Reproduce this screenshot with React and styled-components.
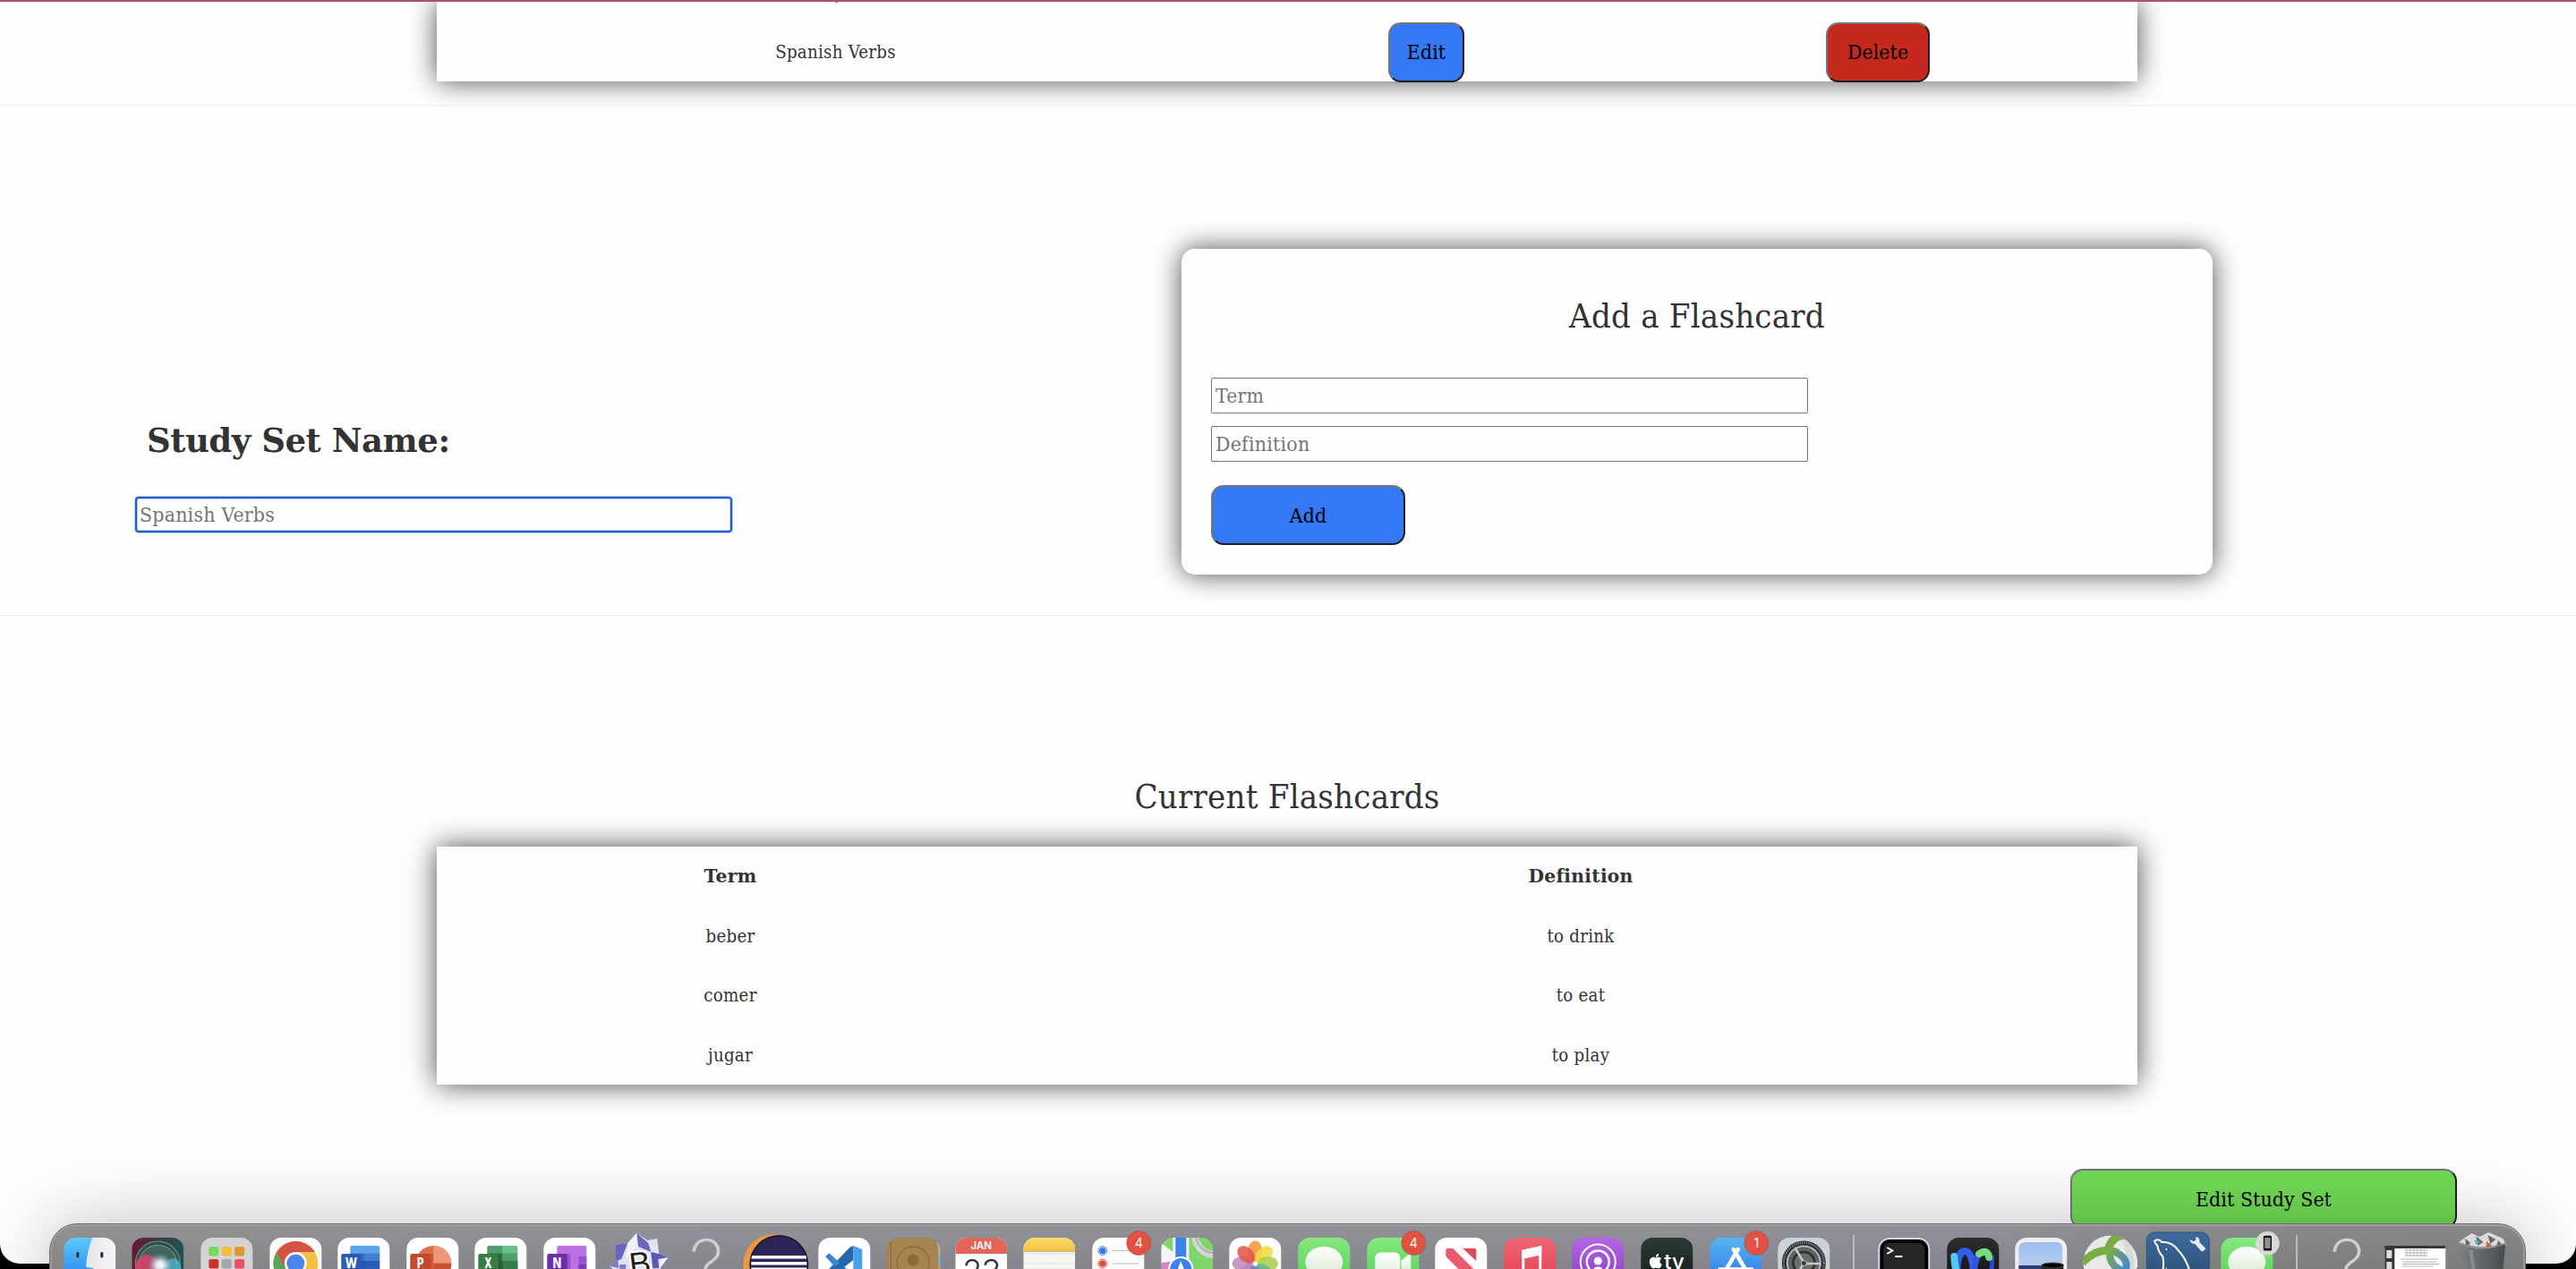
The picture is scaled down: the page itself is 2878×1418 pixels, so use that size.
import React from "react";
import styled, { createGlobalStyle, css } from "styled-components";
import { FaApple } from "react-icons/fa";

const GlobalStyle = createGlobalStyle`
  *, *::before, *::after { box-sizing: border-box; }
  body { margin: 0; background: #000; }
`;

const serif = css`
  font-family: "DejaVu Serif Condensed", "DejaVu Serif", Georgia, serif;
  font-stretch: condensed;
`;

const wideSerif = css`
  font-family: "DejaVu Serif", Georgia, serif;
  font-stretch: normal;
  font-weight: 700;
`;

const Screen = styled.div`
  position: relative;
  width: 2878px;
  height: 1418px;
  overflow: hidden;
  background: #000;
  ${serif}
  color: #333;
`;

const BrowserPage = styled.main`
  display: flex;
  flex-direction: column;
  height: 1412px;
  background: #fefefe;
  border-top: 2px solid #a9536f;
  border-radius: 0 0 22px 22px;
  overflow: hidden;
`;

const Divider = styled.hr`
  width: 100%;
  height: 1px;
  margin: 0;
  border: 0;
  flex: none;
  background: #ececec;
`;

const Section = styled.section`
  display: flex;
  flex-direction: ${(p) => (p.$row ? "row" : "column")};
  align-items: ${(p) => (p.$row ? "flex-start" : "center")};
  height: ${(p) => p.$height}px;
  padding-top: ${(p) => p.$top || 0}px;
  padding-right: 2px;
  flex: none;
`;

const Table = styled.div`
  width: 1900px;
  margin-top: ${(p) => p.$gap || 0}px;
  background: #fefefe;
  box-shadow: 0 0 30px rgba(0, 0, 0, 0.7);
`;

const Row = styled.div`
  display: grid;
  grid-template-columns: ${(p) => p.$columns};
  align-items: center;
  justify-items: center;
  height: 66.5px;
  font-size: 20.3px;
  letter-spacing: 0.25px;
  ${(p) => p.$head && wideSerif}
`;

const RowRemainder = styled.div`
  height: 22.5px;
  padding-left: 445px;
`;

const Descender = styled.div`
  width: 3px;
  height: 1px;
  background: #8a8a8a;
`;

const Button = styled.button`
  ${serif}
  width: ${(p) => p.$width}px;
  height: 67px;
  padding: 0;
  font-size: 22.8px;
  letter-spacing: 0.1px;
  color: #000;
  background: ${(p) => p.$color};
  border: 2px solid;
  border-color: #767676 #1f1f1f #1f1f1f #767676;
  border-radius: 14px;
`;

const NameColumn = styled.div`
  display: flex;
  flex-direction: column;
  width: 1320px;
  flex: none;
  padding: 350px 0 0 151px;
`;

const Title = styled.h2`
  margin: 0;
  font-size: 38px;
  line-height: 48px;
  font-weight: 400;
  letter-spacing: 0.2px;
  text-align: center;
`;

const NameTitle = styled(Title)`
  ${wideSerif}
  font-size: 37px;
  letter-spacing: -0.45px;
  text-align: left;
  padding-left: 13px;
  margin-bottom: 39px;
`;

const Input = styled.input`
  ${serif}
  width: 667px;
  height: 40px;
  padding: 0 0 0 4px;
  font-size: 22.8px;
  letter-spacing: 0.25px;
  color: #333;
  background: #fefefe;
  border: 1px solid #767676;
  border-radius: 2px;
  outline: none;
  &::placeholder { color: #757575; opacity: 1; }
`;

const ActiveInput = styled(Input)`
  padding-left: 3px;
  border: 2px solid #2160c8;
  border-radius: 4px;
  box-shadow: 0 0 0 1px #b9cbec, inset 0 0 0 1px #b9cbec;
`;

const Card = styled.div`
  display: flex;
  flex-direction: column;
  width: 1152px;
  height: 364px;
  margin-top: 160px;
  padding: 51px 33px 33px;
  border-radius: 15px;
  background: #fefefe;
  box-shadow: 0 0 30px rgba(0, 0, 0, 0.7);
`;

const Fields = styled.div`
  display: flex;
  flex-direction: column;
  gap: 14px;
  margin: 45px 0 26px;
`;

const Actions = styled.div`
  display: flex;
  justify-content: flex-end;
  width: 100%;
  margin-top: 94px;
  padding-right: 131px;
`;

const Dock = styled.div`
  position: absolute;
  left: 55px;
  top: 1367px;
  display: flex;
  width: 2767px;
  height: 104px;
  padding-left: 5.7px;
  border: 1px solid #6c6c6e;
  border-radius: 31px;
  background:
    linear-gradient(rgba(0, 0, 0, 0) 0, rgba(0, 0, 0, 0.09) 51px),
    linear-gradient(90deg, #929293, #92929a 25%, #929197 60%, #93909b 78%, #8a8c8a 87%, #868885);
  box-shadow: 0 4px 84px rgba(0, 0, 0, 0.27), inset 0 2px 0 #a09fa2, inset 2px 0 0 #9b9b9c, inset -2px 0 0 #989a98;
`;

const Slot = styled.div`
  width: 76.64px;
  flex: none;
`;

const Glyph = styled.svg`
  display: block;
  width: 76.64px;
  height: 50px;
`;

const DockSeparator = styled.div`
  width: 35.1px;
  height: 80px;
  padding: 12px 16.5px 0;
  flex: none;
  &::before {
    content: "";
    display: block;
    width: 2px;
    height: 68px;
    background: #bcbcbf;
  }
`;

const Tile = ({ fill = "#fff", children }) => (
  <>
    <rect width="58" height="58" rx="13" fill={fill} />
    {children}
  </>
);

const Grad = ({ id, from, to, x2 = 0, y2 = 1 }) => (
  <linearGradient id={id} x1="0" y1="0" x2={x2} y2={y2}>
    <stop offset="0" stopColor={from} />
    <stop offset="1" stopColor={to} />
  </linearGradient>
);

const TileClip = ({ id }) => (
  <clipPath id={id}>
    <rect width="58" height="58" rx="13" />
  </clipPath>
);

const Finder = () => (
  <g clipPath="url(#finderClip)">
    <TileClip id="finderClip" />
    <Grad id="finderBlue" from="#5ecbfa" to="#1f6ff0" />
    <Grad id="finderFace" from="#e6e7ea" to="#f6f6f8" x2={1} y2={0} />
    <rect width="58" height="58" fill="url(#finderBlue)" />
    <path d="M32 0C28 10 25 23 25 33L33 34V58H58V0Z" fill="url(#finderFace)" />
    <rect x="14" y="16" width="3" height="6.5" rx="1.4" fill="#28313d" />
    <rect x="41" y="16" width="3" height="6.5" rx="1.4" fill="#28313d" />
  </g>
);

const Siri = () => (
  <g clipPath="url(#siriClip)">
    <TileClip id="siriClip" />
    <Grad id="siriBg" from="#6a1634" to="#1c5450" x2={1} y2={0} />
    <radialGradient id="siriGlow" cx=".52" cy=".52" r=".5">
      <stop offset="0" stopColor="#fff" />
      <stop offset=".3" stopColor="#e5f2f8" stopOpacity=".9" />
      <stop offset=".65" stopColor="#9bbfd0" stopOpacity=".4" />
      <stop offset="1" stopColor="#2b5a52" stopOpacity="0" />
    </radialGradient>
    <rect width="58" height="58" fill="url(#siriBg)" />
    <circle cx="29" cy="29" r="25" fill="#3f4a4a" stroke="#4da38a" strokeWidth="1.2" />
    <circle cx="29" cy="30" r="21.5" fill="#41635c" stroke="#56b392" />
    <ellipse cx="17" cy="32" rx="13" ry="13" fill="#e0406c" opacity=".85" />
    <ellipse cx="46" cy="34" rx="9" ry="11" fill="#4db7d6" opacity=".75" />
    <ellipse cx="31" cy="30" rx="16" ry="15" fill="url(#siriGlow)" />
  </g>
);

const Launchpad = () => (
  <Tile fill="#d3d3d5">
    {["#72dc5a", "#f3bd3e", "#e69334", "#cc3427", "#9fa8ad", "#e8505f"].map((c, i) => (
      <rect key={i} x={9 + (i % 3) * 14.4} y={10 + Math.floor(i / 3) * 14} width="11" height="10.5" rx="2.5" fill={c} />
    ))}
  </Tile>
);

const Chrome = () => (
  <Tile fill="#fafafa">
    <circle cx="29" cy="29" r="25" fill="#f3c244" />
    <path d="M29 29L7.5 16.5A25 25 0 0 1 50.5 16H29Z" fill="#d65244" />
    <path d="M7.5 16.5A25 25 0 0 0 29 54L34 36L18 34Z" fill="#59a55c" />
    <path d="M7.5 16.5L18 35L29 22Z" fill="#d65244" />
    <circle cx="29" cy="28.5" r="12.5" fill="#fff" />
    <circle cx="29" cy="28.5" r="10" fill="#4a86ea" />
  </Tile>
);

const OfficeTile = ({ letter, dark, children }) => (
  <Tile>
    {children}
    <rect x="4" y="18" width="22.5" height="24" rx="2" fill={dark} />
    <text x="15.2" y="34" textAnchor="middle" fontFamily="'Open Sans', sans-serif" fontWeight="700" fontSize="16.5" fill="#fff">
      {letter}
    </text>
  </Tile>
);

const Word = () => (
  <OfficeTile letter="W" dark="#2a5bb8">
    <path d="M16 9H45Q47 9 47 11V18H14V11Q14 9 16 9Z" fill="#5ba6ea" />
    <rect x="14" y="17.5" width="33" height="8.5" fill="#4380d2" />
    <rect x="14" y="26" width="33" height="18" fill="#2a5bb8" />
    <rect x="14" y="18" width="16" height="26" fill="#234f9f" opacity=".45" />
  </OfficeTile>
);

const PowerPoint = () => (
  <OfficeTile letter="P" dark="#c34a2b">
    <circle cx="30" cy="29" r="20" fill="#de6d4e" />
    <path d="M30 9A20 20 0 0 1 50 29H30Z" fill="#f09576" />
    <path d="M30 28.5H50A20 20 0 0 1 30 49Z" fill="#ca5234" />
    <rect x="14" y="18" width="15.500" height="26" fill="#a83c22" opacity=".45" />
  </OfficeTile>
);

const Excel = () => (
  <OfficeTile letter="X" dark="#357c45">
    <path d="M16 9H31.500V18H14V11Q14 9 16 9Z" fill="#519d6a" />
    <path d="M31.500 9H46Q48 9 48 11V18H31.500Z" fill="#66c288" />
    <rect x="31.5" y="17.5" width="16.5" height="8.5" fill="#519d6a" />
    <rect x="14" y="17.5" width="17.5" height="8.5" fill="#357c45" />
    <rect x="14" y="26" width="34" height="18" fill="#2c5f3c" />
    <rect x="31.5" y="26" width="16.5" height="18" fill="#347d48" />
    <rect x="24" y="18" width="6" height="26" fill="#22532f" opacity=".5" />
  </OfficeTile>
);

const OneNote = () => (
  <OfficeTile letter="N" dark="#6c2fac">
    <path d="M17 9H46Q48 9 48 11V53H15V11Q15 9 17 9Z" fill="#bb70e3" />
    <rect x="39" y="21" width="9" height="9" fill="#9c50cf" />
    <rect x="39" y="30" width="9" height="14" fill="#8338ba" />
    <rect x="24" y="18" width="6" height="26" fill="#7b35ad" opacity=".5" />
  </OfficeTile>
);

const BBEdit = () => (
  <g>
    <path d="M3 8L17 6L27 -5L39 3L50 1L52 18L62 22L54 33V58H4V38L-3 32L6 24Z" fill="#e1e2f2" />
    <path d="M3 8L17 6L10 24L4 26Z" fill="#6966bf" />
    <path d="M27 -5L40 6L43 16L29 10Z" fill="#6966bf" />
    <path d="M43 16L52 18L62 22L51 24L52 34H45Z" fill="#5b59b5" />
    <path d="M27 -5L17 6L15 24L27 10Z" fill="#f1f1fa" />
    <path d="M-3 32L6 24L7 34ZM8 30h7v6H8z" fill="#7d7bc8" />
    <path d="M54 25L62 22L54 33Z" fill="#f5f5fb" />
    <text x="31" y="41" textAnchor="middle" transform="rotate(-7 32 32)" fontFamily="'Liberation Sans', sans-serif" fontSize="36" fontWeight="400" fill="#1f1f22" stroke="#fff" strokeWidth="4" paintOrder="stroke">
      B
    </text>
  </g>
);

const Missing = () => (
  <text x="29" y="59" textAnchor="middle" fontFamily="Inter, Roboto, sans-serif" fontWeight="250" fontSize="79" fill="#cfcfd1">
    ?
  </text>
);

const Eclipse = () => (
  <g>
    <circle cx="27" cy="30" r="34" fill="#e9993f" />
    <circle cx="33" cy="30" r="33" fill="#17162a" />
    <circle cx="33" cy="30" r="31.5" fill="#2c2456" />
    <path d="M3 20H63L64 23.500H2ZM2 27H64V30.500H2ZM2 33.500H64V37H2Z" fill="#fff" />
  </g>
);

const VSCode = () => (
  <Tile>
    <path d="M8 21L12 17.500L43 45L40 52Z" fill="#2f79c6" />
    <path d="M8 39L35 11L39 9V25L12 46Z" fill="#2766a9" />
    <path d="M8 21L12 17.500L24 28L18 32Z" fill="#3b86d2" />
    <path d="M39 9L49 13V50L39 54Z" fill="#4ba0ee" />
  </Tile>
);

const Contacts = () => (
  <g>
    <path d="M52 6H57Q60 8 60 12V58H52Z" fill="#b9b4a6" />
    <rect x="54" y="20" width="6" height="12" fill="#6cb9e2" />
    <rect x="54" y="32" width="6" height="12" fill="#e8953c" />
    <rect width="58" height="58" rx="13" fill="#a78350" />
    <path d="M5 4V58" stroke="#8b6a3b" />
    <circle cx="30" cy="28" r="18" fill="none" stroke="#8b6a3b" strokeWidth="1.300" />
    <circle cx="30" cy="25" r="6.500" fill="#8b6a3b" />
    <path d="M17 42Q20 35 30 35T43 42Z" fill="#8b6a3b" />
  </g>
);

const Calendar = () => (
  <g clipPath="url(#calendarClip)">
    <TileClip id="calendarClip" />
    <rect width="58" height="58" fill="#fff" />
    <rect width="58" height="18" fill="#e3655a" />
    <text x="29" y="13.500" textAnchor="middle" fontFamily="Inter, sans-serif" fontWeight="600" fontSize="11.500" fill="#fff">JAN</text>
    <text x="29" y="50" textAnchor="middle" fontFamily="Inter, sans-serif" fontWeight="300" fontSize="36" letterSpacing="-1" fill="#2e2e2e">23</text>
  </g>
);

const Notes = () => (
  <g clipPath="url(#notesClip)">
    <TileClip id="notesClip" />
    <Grad id="notesTop" from="#fbdb6b" to="#f5c33c" />
    <rect width="58" height="58" fill="#f6f5f2" />
    <rect width="58" height="15" fill="url(#notesTop)" />
    <path d="M0 15.500H58" stroke="#b5b4ac" />
    <path d="M2 18H58" stroke="#bbb" strokeDasharray="1 1.500" />
    <path d="M0 29H58" stroke="#dddcd8" />
  </g>
);

const Reminders = () => (
  <Tile fill="#fbfbf9">
    {["#3478ea", "#e2473b"].map((c, i) => (
      <g key={c}>
        <circle cx="11.500" cy={14.500 + i * 14.500} r="4.800" fill="none" stroke={c} strokeWidth="1" />
        <circle cx="11.500" cy={14.500 + i * 14.500} r="3.600" fill={c} />
        <path d={`M22 ${14.500 + i * 14.500}H52`} stroke="#c0c0c0" />
      </g>
    ))}
  </Tile>
);

const Maps = () => (
  <g clipPath="url(#mapsClip)">
    <TileClip id="mapsClip" />
    <rect width="58" height="58" fill="#7fd66d" />
    <path d="M0 25L10 27L16 58H0Z" fill="#d287c6" />
    <path d="M0 6L16 18V26L0 28Z" fill="#f4f4f5" />
    <path d="M38 0A22 22 0 0 0 58 19" fill="none" stroke="#d3d5d8" strokeWidth="8" />
    <path d="M39 0A20 20 0 0 0 58 17" fill="none" stroke="#a4a8ab" strokeWidth="1.500" />
    <rect x="13" width="18" height="30" fill="#f5f7fa" />
    <rect x="16" width="12" height="30" fill="#3b82ec" />
    <circle cx="22" cy="35" r="14" fill="#fff" />
    <circle cx="22" cy="35" r="12" fill="#3b82ec" />
    <path d="M22 26L28 42L22 38L16 42Z" fill="#fff" />
  </g>
);

const Photos = () => (
  <Tile fill="#fcfcfb">
    {["#f0973a", "#f2dd3f", "#a9cf52", "#62b98a", "#5c91c9", "#8a78bb", "#c08abf", "#e2574a"].map((c, i) => (
      <ellipse key={c} cx="29" cy="15" rx="8" ry="11.500" fill={c} opacity=".88" transform={`rotate(${i * 45} 29 29)`} />
    ))}
    <circle cx="29" cy="29" r="1.500" fill="#fff" />
  </Tile>
);

const Messages = () => (
  <Tile fill="url(#messagesGreen)">
    <Grad id="messagesGreen" from="#86e880" to="#4fcd51" />
    <Grad id="bubble" from="#fff" to="#d6e6d0" />
    <ellipse cx="29" cy="27.500" rx="21" ry="17.500" fill="url(#bubble)" />
  </Tile>
);

const FaceTime = () => (
  <Tile fill="url(#faceGreen)">
    <Grad id="faceGreen" from="#86e880" to="#4fcd51" />
    <Grad id="camera" from="#fff" to="#dcebd9" />
    <rect x="9" y="16.500" width="28" height="27" rx="6" fill="url(#camera)" />
    <path d="M38 26L47 18.500Q49 17.500 49 20V40Q49 42 47 41L38 34Z" fill="url(#camera)" />
  </Tile>
);

const News = () => (
  <Tile>
    <path d="M12 21V14Q12 12 14 12H20L46 38V47H38Z" fill="#ea5a6c" />
    <path d="M31 12H44Q46 12 46 14V26Z" fill="#e04a5c" />
    <path d="M12 35L24 47H14Q12 47 12 45Z" fill="#ea5065" />
  </Tile>
);

const Music = () => (
  <Tile fill="url(#musicRed)">
    <Grad id="musicRed" from="#ee6675" to="#e23c4f" />
    <path d="M20 14L42 9V42H39V19.500L23 23V48H20Z" fill="#fff" />
    <path d="M20 14L42 9V19L20 24Z" fill="#fff" />
  </Tile>
);

const Podcasts = () => (
  <Tile fill="url(#podPurple)">
    <Grad id="podPurple" from="#b566e6" to="#8638bf" />
    <circle cx="29" cy="27" r="19.500" fill="none" stroke="#fff" strokeWidth="2" />
    <circle cx="29" cy="27" r="12.500" fill="none" stroke="#fff" strokeWidth="2.500" />
    <circle cx="29" cy="26" r="4.500" fill="#fff" />
    <rect x="24" y="32.500" width="10" height="14" rx="4" fill="#fff" />
  </Tile>
);

const AppleTV = () => (
  <Tile fill="url(#tvDark)">
    <Grad id="tvDark" from="#2b3a35" to="#111917" />
    <FaApple x="7" y="16.500" size="19" color="#fff" />
    <text x="26" y="35.500" fontFamily="Inter, sans-serif" fontWeight="500" fontSize="24" fill="#fff">tv</text>
  </Tile>
);

const AppStore = () => (
  <Tile fill="url(#storeBlue)">
    <Grad id="storeBlue" from="#57b5f0" to="#2a6de6" />
    <path d="M26.500 13L40 36M31.500 13L18 36M11 35.500H47" stroke="#fff" strokeWidth="4.500" strokeLinecap="round" />
  </Tile>
);

const Settings = () => (
  <Tile fill="#cbd3d8">
    <circle cx="29" cy="28" r="24.500" fill="#2c3033" />
    <circle cx="29" cy="28" r="22.500" fill="none" stroke="#8f9496" strokeWidth="2" strokeDasharray="1.200 1.200" />
    <circle cx="29" cy="28" r="18.500" fill="#5f6365" stroke="#b4b8bb" strokeWidth="2" />
    <circle cx="29" cy="28" r="12" fill="#6c6c69" stroke="#2a2d2f" strokeWidth="2.500" />
    <path d="M29 28L19 11M29 29H48M29 28L19 46" stroke="#c4c9cc" strokeWidth="2.500" />
    <circle cx="29" cy="28.500" r="3" fill="#33373a" stroke="#c4c9cc" />
  </Tile>
);

const Terminal = () => (
  <Tile fill="#cddde4">
    <rect x="2" y="2" width="54" height="54" rx="11" fill="#000" />
    <rect x="6" y="6" width="46" height="46" rx="7" fill="#262626" />
    <path d="M10 11L16 14.500L10 18" fill="none" stroke="#fff" strokeWidth="2" />
    <path d="M19 21H27" stroke="#fff" strokeWidth="2" />
  </Tile>
);

const Webex = () => (
  <Tile fill="url(#webexBg)">
    <Grad id="webexBg" from="#2d2d2e" to="#0f0f10" />
    <path d="M50 20Q52 38 44 48" fill="none" stroke="#2a48cf" strokeWidth="5" />
    <path d="M11 40Q11 15 20 15T30 44" fill="none" stroke="#315fec" strokeWidth="8" />
    <path d="M30 48Q30 18 39 17" fill="none" stroke="#2c55e0" strokeWidth="7" />
    <path d="M36 18Q45 12 47 22" fill="none" stroke="#74dc7e" strokeWidth="8" strokeLinecap="round" />
    <path d="M8 21Q9 40 15 48" fill="none" stroke="#55c8f5" strokeWidth="8" strokeLinecap="round" />
  </Tile>
);

const Preview = () => (
  <Tile fill="#efeff0">
    <Grad id="sky" from="#9dbdf0" to="#b7ccec" />
    <path d="M4 13Q4 5 12 5H46Q53 5 53 13V31H4Z" fill="url(#sky)" />
    <rect x="4" y="31" width="49" height="23" fill="#2e3c72" />
    <path d="M30 31H54V50H30Z" fill="#1b1b1d" />
    <ellipse cx="42" cy="31" rx="12.500" ry="3" fill="#050505" stroke="#555" strokeWidth=".800" />
  </Tile>
);

const GreenSwirl = () => (
  <g clipPath="url(#swirlClip)">
    <clipPath id="swirlClip"><circle cx="29.500" cy="28" r="30.500" /></clipPath>
    <Grad id="swirlTail" from="#7aae44" to="#3f86d8" x2={1} />
    <circle cx="29.500" cy="28" r="30.500" fill="#e8e9e8" />
    <path d="M44 -2Q54 14 52 44" fill="none" stroke="#d3dcdb" strokeWidth="8" />
    <path d="M-2 28Q18 8 38 17" fill="none" stroke="#7aae44" strokeWidth="9" />
    <path d="M27 13Q31 -2 46 -3" fill="none" stroke="#7aae44" strokeWidth="9" />
    <path d="M29 12Q26 32 46 38Q52 22 32 15" fill="none" stroke="url(#swirlTail)" strokeWidth="8" />
  </g>
);

const Workbench = () => (
  <g>
    <Grad id="workbenchBlue" from="#3c6b9d" to="#27466b" />
    <rect x="-7" y="-6" width="70" height="70" rx="9" fill="url(#workbenchBlue)" stroke="#2a5280" />
    <path d="M10 42Q13 30 11 21Q6 16 5 9Q0 3 3 3Q7 1 10 5Q22 4 29 15Q37 23 42 40" fill="none" stroke="#fff" strokeWidth="2" />
    <path d="M12 42L15 35L19 42" fill="none" stroke="#fff" strokeWidth="1.500" />
    <circle cx="15" cy="13" r="1" fill="#fff" />
    <path d="M48 -1Q53 0 52 5L59 12Q57 16 54 15L47 7Q42 7 41 2L45 4L48 3Z" fill="#e7eef3" />
  </g>
);

const PhoneMessages = () => (
  <Tile fill="url(#messagesGreen)">
    <ellipse cx="29" cy="27.500" rx="21" ry="17.500" fill="url(#bubble)" />
    <circle cx="52" cy="6.300" r="13.300" fill="#d8d8d8" />
    <rect x="47.500" y="-2.300" width="9.200" height="16.700" rx="1.500" fill="#111" />
    <rect x="48.900" y="0" width="6.400" height="12" fill="#8e8e8e" />
  </Tile>
);

const MinimizedWindow = () => (
  <g>
    <rect x="-6" y="9" width="68" height="45" fill="#fff" />
    <rect x="-6" y="9" width="68" height="3" fill="#39333d" />
    <rect x="-6" y="9" width="11" height="45" fill="#39333d" />
    <path d="M-4 14h6v9h-6zM-4 27h6v9h-6z" fill="#ddd" />
    <path d="M17 14H42M17 17H42M17 20H42" stroke="#777" strokeDasharray="3 1" />
    <path d="M12 24H54M14 27H52M14 29.500H55M14 32H48" stroke="#aaa" strokeWidth=".900" />
  </g>
);

const Trash = () => (
  <g>
    <Grad id="binMetal" from="#7b7f81" to="#45484a" x2={1} y2={0} />
    <path d="M1 5L9 -1L15 -5L24 -1L34 -6L41 -3L50 1L54 8L48 14H6Z" fill="#dcdcda" />
    <path d="M8 1L14 6L9 10ZM20 -2L28 5L22 9ZM33 -3L36 7L42 2ZM45 3L50 9L42 11Z" fill="#66676b" />
    <path d="M18 2L24 4L20 8Z" fill="#4eb8cc" />
    <path d="M32 4L38 9L31 11Z" fill="#c9683a" />
    <path d="M2 7Q28 17 53 7L48 58H8Z" fill="url(#binMetal)" opacity=".95" />
    <path d="M2 6Q28 16 53 6" fill="none" stroke="#85898a" strokeWidth="1.500" />
    <path d="M14 14L18 40" stroke="#999d9e" strokeWidth="4" opacity=".6" />
  </g>
);

const CountBadge = ({ count }) => (
  <g>
    <circle cx="52" cy="6" r="13.500" fill="#e25243" stroke="#a24e4a" strokeWidth=".600" />
    <text x="52" y="11" textAnchor="middle" fontFamily="Inter, sans-serif" fontSize="14" fill="#fff">{count}</text>
  </g>
);

const apps = [
  [Finder], [Siri], [Launchpad], [Chrome], [Word], [PowerPoint], [Excel], [OneNote], [BBEdit], [Missing],
  [Eclipse], [VSCode], [Contacts], [Calendar], [Notes], [Reminders, 4], [Maps], [Photos], [Messages],
  [FaceTime, 4], [News], [Music], [Podcasts], [AppleTV], [AppStore, 1], [Settings],
];
const recents = [[Terminal], [Webex], [Preview], [GreenSwirl], [Workbench], [PhoneMessages]];
const stacks = [[Missing], [MinimizedWindow], [Trash]];

const DockItems = ({ items }) =>
  items.map(([Icon, count], i) => (
    <Slot key={i}>
      <Glyph viewBox="-9.300 -15 76.640 50">
        <Icon />
        {count && <CountBadge count={count} />}
      </Glyph>
    </Slot>
  ));

const cards = [
  ["beber", "to drink"],
  ["comer", "to eat"],
  ["jugar", "to play"],
];

export default function App() {
  return (
    <Screen>
      <GlobalStyle />
      <BrowserPage>
        <Section $height={115}>
          <Table>
            <RowRemainder><Descender /></RowRemainder>
            <Row $columns="891px 429px 580px">
              <span>Spanish Verbs</span>
              <Button $width={85} $color="#3478f6">Edit</Button>
              <Button $width={116} $color="#c5281c">Delete</Button>
            </Row>
          </Table>
        </Section>
        <Divider />
        <Section $row $height={569}>
          <NameColumn>
            <NameTitle>Study Set Name:</NameTitle>
            <ActiveInput placeholder="Spanish Verbs" />
          </NameColumn>
          <Card>
            <Title>Add a Flashcard</Title>
            <Fields>
              <Input placeholder="Term" />
              <Input placeholder="Definition" />
            </Fields>
            <Button $width={217} $color="#3478f6">Add</Button>
          </Card>
        </Section>
        <Divider />
        <Section $height={724} $top={178}>
          <Title>Current Flashcards</Title>
          <Table $gap={32}>
            <Row $head $columns="656px 1fr">
              <span>Term</span>
              <span>Definition</span>
            </Row>
            {cards.map(([term, definition]) => (
              <Row key={term} $columns="656px 1fr">
                <span>{term}</span>
                <span>{definition}</span>
              </Row>
            ))}
          </Table>
          <Actions>
            <Button $width={432} $color="#70da55">Edit Study Set</Button>
          </Actions>
        </Section>
      </BrowserPage>
      <Dock>
        <DockItems items={apps} />
        <DockSeparator />
        <DockItems items={recents} />
        <DockSeparator />
        <DockItems items={stacks} />
      </Dock>
    </Screen>
  );
}
